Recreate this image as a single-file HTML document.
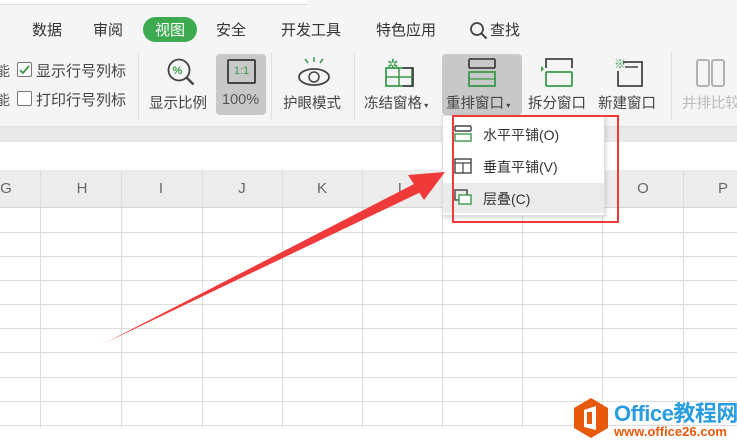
<!DOCTYPE html>
<html><head><meta charset="utf-8"><style>
*{margin:0;padding:0;box-sizing:border-box}
body{width:737px;height:447px;overflow:hidden;background:#fff;position:relative;font-family:"Liberation Sans","Noto Sans CJK SC",sans-serif;color:#333}
.a{position:absolute;white-space:nowrap}
.t{font-size:15px;top:19px}
.lbl{font-size:14.5px;top:92px;color:#444}
.vl{position:absolute;top:170px;width:1px;height:258px;background:#dcdcdc}
.hl{position:absolute;left:0;width:737px;height:1px;background:#dcdcdc}
.ch{position:absolute;top:180px;font-size:15px;color:#666;width:20px;text-align:center}
</style></head><body>
<div class="a" style="left:0;top:0;width:737px;height:126px;background:#f5f5f5"></div>
<div class="a" style="left:0;top:0;width:307px;height:5px;background:#fff;border-bottom:1px solid #ddd"></div>
<div class="a" style="left:0;top:126px;width:737px;height:16px;background:#e9e9e9;border-top:1px solid #e0e0e0"></div>
<div class="a" style="left:0;top:170px;width:737px;height:38px;background:#ececec;border-bottom:1px solid #d4d4d4"></div>
<!-- tabs -->
<div class="a t" style="left:32px">数据</div>
<div class="a t" style="left:93px">审阅</div>
<div class="a" style="left:143px;top:17px;width:54px;height:25px;border-radius:13px;background:#3daa4f"></div>
<div class="a t" style="left:155px;color:#fff">视图</div>
<div class="a t" style="left:216px">安全</div>
<div class="a t" style="left:281px">开发工具</div>
<div class="a t" style="left:376px">特色应用</div>
<div class="a t" style="left:490px">查找</div>
<svg class="a" style="left:469px;top:21px" width="20" height="20"><circle cx="8" cy="8" r="6" fill="none" stroke="#444" stroke-width="1.8"/><path d="M12.5 12.5l5 5" stroke="#444" stroke-width="2"/></svg>
<!-- checkboxes -->
<div class="a" style="left:-4px;top:61px;font-size:14px;color:#555">能</div>
<div class="a" style="left:-4px;top:90px;font-size:14px;color:#555">能</div>
<div class="a" style="left:17px;top:62px;width:15px;height:15px;border:1px solid #777;border-radius:2px;background:#fff"></div>
<svg class="a" style="left:18px;top:63px" width="13" height="13"><path d="M2 7l3 3 6-7" stroke="#3a9a4a" stroke-width="1.8" fill="none"/></svg>
<div class="a" style="left:36px;top:60px;font-size:15px;color:#444">显示行号列标</div>
<div class="a" style="left:17px;top:91px;width:15px;height:15px;border:1px solid #777;border-radius:2px;background:#fff"></div>
<div class="a" style="left:36px;top:89px;font-size:15px;color:#444">打印行号列标</div>
<div class="a" style="left:138px;top:52px;width:1px;height:68px;background:#e0e0e0"></div>
<!-- zoom icon -->
<svg class="a" style="left:164px;top:56px" width="34" height="34"><circle cx="15" cy="14" r="10.5" fill="none" stroke="#444" stroke-width="1.8"/><path d="M22.5 21.5l7 7" stroke="#444" stroke-width="2.4"/><text x="8.5" y="18" font-size="11" font-weight="bold" fill="#3a9a4a" font-family="Liberation Sans">%</text></svg>
<div class="a lbl" style="left:149px">显示比例</div>
<div class="a" style="left:216px;top:54px;width:50px;height:61px;background:#c8c8c8;border-radius:4px"></div>
<div class="a" style="left:227px;top:59px;width:29px;height:25px;border:2px solid #444;border-radius:2px;font-size:11px;color:#3a9a4a;text-align:center;line-height:21px">1:1</div>
<div class="a lbl" style="left:222px;color:#555">100%</div>
<div class="a" style="left:271px;top:52px;width:1px;height:68px;background:#e0e0e0"></div>
<svg class="a" style="left:296px;top:56px" width="36" height="32"><path d="M9 3l3 4M18 1v5M27 3l-3 4" stroke="#3a9a4a" stroke-width="1.5"/><ellipse cx="18" cy="21" rx="15" ry="8" fill="none" stroke="#444" stroke-width="1.8"/><circle cx="18" cy="21" r="5" fill="none" stroke="#444" stroke-width="1.5"/></svg>
<div class="a lbl" style="left:283px">护眼模式</div>
<div class="a" style="left:354px;top:52px;width:1px;height:68px;background:#e0e0e0"></div>
<svg class="a" style="left:383px;top:55px" width="34" height="34"><path d="M3 13h26v18H3z" fill="none" stroke="#3a9a4a" stroke-width="1.8"/><path d="M3 22h26M16 13v18" stroke="#3a9a4a" stroke-width="1.5"/><path d="M20 13h10v18h-10" fill="none" stroke="#444" stroke-width="1.8"/><text x="4" y="14" font-size="14" fill="#3a9a4a">✲</text></svg>
<div class="a lbl" style="left:364px">冻结窗格<span style="font-size:8px"> ▾</span></div>
<div class="a" style="left:442px;top:54px;width:80px;height:61px;background:#c8c8c8;border-radius:4px"></div>
<svg class="a" style="left:466px;top:56px" width="32" height="34"><path d="M3 3h26M3 3v9M29 3v9M3 12h26" fill="none" stroke="#444" stroke-width="1.8"/><rect x="3" y="16" width="26" height="14" fill="none" stroke="#3a9a4a" stroke-width="1.8"/><path d="M3 23h26" stroke="#3a9a4a" stroke-width="1.2"/></svg>
<div class="a lbl" style="left:446px">重排窗口<span style="font-size:8px"> ▾</span></div>
<svg class="a" style="left:540px;top:56px" width="36" height="34"><path d="M6 12V3h26v9" fill="none" stroke="#444" stroke-width="1.8"/><rect x="6" y="16" width="26" height="14" rx="1" fill="none" stroke="#3a9a4a" stroke-width="1.8"/><path d="M1 10l3 3-3 3" fill="#3a9a4a"/></svg>
<div class="a lbl" style="left:528px">拆分窗口</div>
<svg class="a" style="left:612px;top:56px" width="36" height="34"><path d="M11 6h19v24H6V15" fill="none" stroke="#444" stroke-width="1.8"/><path d="M13 11h13" stroke="#444" stroke-width="1.5"/><text x="2" y="12" font-size="12" fill="#3a9a4a">※</text></svg>
<div class="a lbl" style="left:598px">新建窗口</div>
<div class="a" style="left:671px;top:52px;width:1px;height:68px;background:#e0e0e0"></div>
<svg class="a" style="left:695px;top:58px" width="32" height="30"><rect x="2" y="2" width="12" height="26" rx="2" fill="none" stroke="#aaa" stroke-width="1.8"/><rect x="17" y="2" width="12" height="26" rx="2" fill="none" stroke="#aaa" stroke-width="1.8"/></svg>
<div class="a lbl" style="left:682px;color:#bbb">并排比较</div>
<!-- grid -->
<div class="ch" style="left:-4px">G</div>
<div class="ch" style="left:72px">H</div>
<div class="ch" style="left:151px">I</div>
<div class="ch" style="left:232px">J</div>
<div class="ch" style="left:312px">K</div>
<div class="ch" style="left:392px">L</div>
<div class="ch" style="left:633px">O</div>
<div class="ch" style="left:713px">P</div>
<div class="vl" style="left:40px"></div><div class="vl" style="left:121px"></div><div class="vl" style="left:202px"></div><div class="vl" style="left:282px"></div><div class="vl" style="left:362px"></div><div class="vl" style="left:442px"></div><div class="vl" style="left:522px"></div><div class="vl" style="left:602px"></div><div class="vl" style="left:683px"></div>
<div class="hl" style="top:232px"></div><div class="hl" style="top:256px"></div><div class="hl" style="top:280px"></div><div class="hl" style="top:304px"></div><div class="hl" style="top:328px"></div><div class="hl" style="top:352px"></div><div class="hl" style="top:377px"></div><div class="hl" style="top:401px"></div><div class="hl" style="top:425px"></div>
<!-- menu -->
<div class="a" style="left:442px;top:115px;width:163px;height:101px;background:#fff;border:1px solid #ddd;box-shadow:1px 2px 4px rgba(0,0,0,.15)"></div>
<div class="a" style="left:443px;top:183px;width:161px;height:30px;background:#ebebeb"></div>
<svg class="a" style="left:453px;top:124px" width="20" height="90"><path d="M2 2h16M2 2v5M18 2v5M2 7h16" fill="none" stroke="#444" stroke-width="1.4"/><rect x="2" y="10" width="16" height="7" fill="none" stroke="#3a9a4a" stroke-width="1.4"/><rect x="2" y="35" width="16" height="14" fill="none" stroke="#444" stroke-width="1.4"/><path d="M2 39h16M10 39v10" stroke="#444" stroke-width="1.2"/><rect x="2" y="66" width="12" height="10" fill="none" stroke="#444" stroke-width="1.4"/><rect x="6" y="71" width="12" height="9" fill="#fff" stroke="#3a9a4a" stroke-width="1.4"/></svg>
<div class="a" style="left:483px;top:125px;font-size:14px">水平平铺(O)</div>
<div class="a" style="left:483px;top:157px;font-size:14px">垂直平铺(V)</div>
<div class="a" style="left:483px;top:189px;font-size:14px">层叠(C)</div>
<div class="a" style="left:452px;top:115px;width:167px;height:108px;border:2px solid #f03a3a"></div>
<!-- arrow -->
<svg class="a" style="left:0;top:0" width="737" height="447"><path d="M105 343L418 182L423 191Z" fill="#f03a3a"/><path d="M445 172L408 175L424 200Z" fill="#f03a3a"/></svg>
<!-- logo -->
<svg class="a" style="left:572px;top:397px" width="38" height="42"><path d="M19 1L36 11V31L19 41L2 31V11Z" fill="#e8590c"/><path d="M12 13l12-4v24l-12-3z" fill="#fff"/><rect x="15" y="15" width="5" height="12" fill="#e8590c"/></svg>
<div class="a" style="left:614px;top:396px;font-size:22px;font-weight:bold;color:#2a9de0;letter-spacing:-0.5px">Office教程网</div>
<div class="a" style="left:614px;top:424px;font-size:13px;font-weight:bold;color:#e8590c">www.office26.com</div>
</body></html>
